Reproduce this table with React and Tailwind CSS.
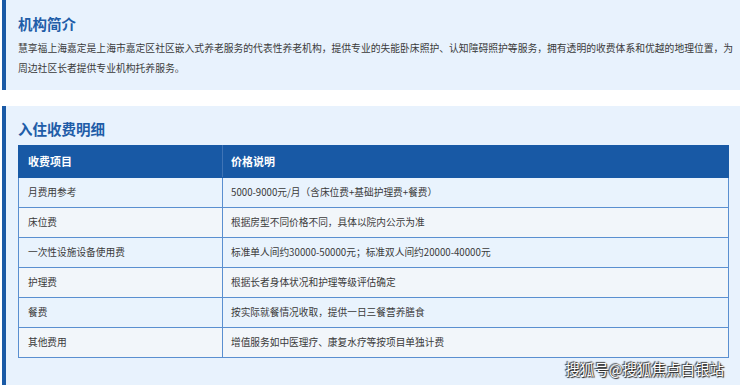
const rows = [
  ["月费用参考", "5000-9000元/月（含床位费+基础护理费+餐费）"],
  ["床位费", "根据房型不同价格不同，具体以院内公示为准"],
  ["一次性设施设备使用费", "标准单人间约30000-50000元；标准双人间约20000-40000元"],
  ["护理费", "根据长者身体状况和护理等级评估确定"],
  ["餐费", "按实际就餐情况收取，提供一日三餐营养膳食"],
  ["其他费用", "增值服务如中医理疗、康复水疗等按项目单独计费"],
];

export default function App() {
  return (
    <div
      className="w-[740px] h-[385px] overflow-hidden bg-white relative"
      style={{ fontFamily: '"Noto Sans CJK SC", "Noto Sans", sans-serif' }}
    >
      {/* 机构简介 */}
      <section className="ml-[2px] h-[90px] bg-[#e8f2fd] border-l-[4px] border-[#1a5aa6] pl-[12px] pr-[2px] pt-[14px]">
        <h2 className="text-[14.5px] leading-[20px] font-bold text-[#1f5da8]">机构简介</h2>
        <p className="mt-[4px] text-[9.8px] leading-[20px] text-[#3a3a3a]">
          慧享福上海嘉定是上海市嘉定区社区嵌入式养老服务的代表性养老机构，提供专业的失能卧床照护、认知障碍照护等服务，拥有透明的收费体系和优越的地理位置，为周边社区长者提供专业机构托养服务。
        </p>
      </section>

      {/* 入住收费明细 */}
      <section className="mt-[16px] ml-[2px] h-[300px] bg-[#e8f2fd] border-l-[4px] border-[#1a5aa6] pl-[12px] pr-[11px] pt-[13px]">
        <h2 className="text-[14.5px] leading-[20px] font-bold text-[#1f5da8]">入住收费明细</h2>
        <table className="mt-[6px] w-[711px] border-collapse text-[9.7px]">
          <thead>
            <tr className="bg-[#1859a5] text-white h-[32px]">
              <th className="w-[204px] text-left font-bold text-[11px] pl-[9px] border border-[#1859a5] border-r-[#3f74b6]">收费项目</th>
              <th className="text-left font-bold text-[11px] pl-[8px] border border-[#1859a5]">价格说明</th>
            </tr>
          </thead>
          <tbody>
            {rows.map(([k, v], i) => (
              <tr key={k} className={`h-[30px] ${i % 2 === 0 ? "bg-[#e9f3fd]" : "bg-[#f2f6fa]"}`}>
                <td className="pl-[9px] text-[#3a3a3a] border border-[#5a8fd0]">{k}</td>
                <td className="pl-[8px] text-[#3a3a3a] border border-[#5a8fd0]">{v}</td>
              </tr>
            ))}
          </tbody>
        </table>
      </section>

      <div
        className="absolute right-[16px] bottom-[6px] text-[14.5px] leading-[20px] text-white"
        style={{ textShadow: "0 0 1px #222, 1px 1px 1px #222, -1px -1px 1px #444" }}
      >
        搜狐号@搜狐焦点白银站
      </div>
    </div>
  );
}
